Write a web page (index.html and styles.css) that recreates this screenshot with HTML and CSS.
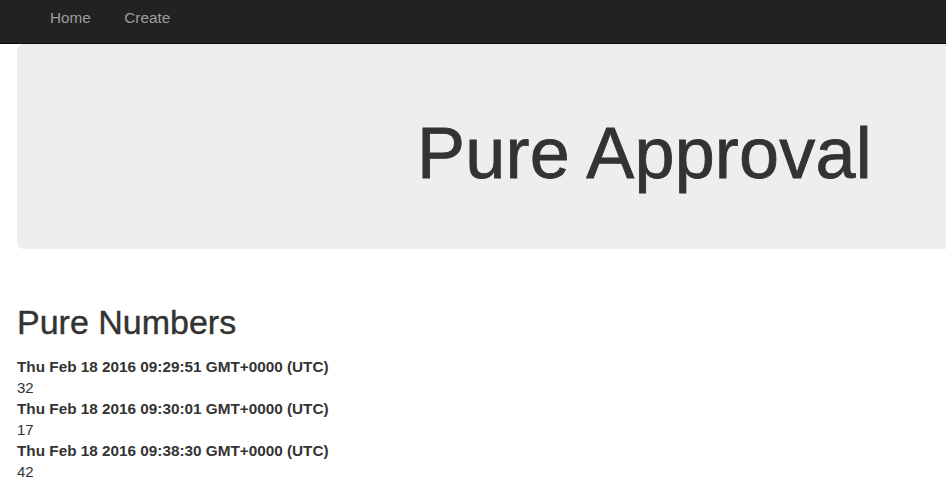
FILE: index.html
```html
<!DOCTYPE html>
<html>
<head>
<meta charset="utf-8">
<link rel="stylesheet" href="styles.css">
</head>
<body>
<nav class="navbar">
  <ul class="nav">
    <li><a href="#">Home</a></li>
    <li><a href="#">Create</a></li>
  </ul>
</nav>
<main class="page">
  <section class="jumbotron">
    <h1>Pure Approval</h1>
  </section>
  <h2 class="section-title">Pure Numbers</h2>
  <dl class="entries">
    <dt>Thu Feb 18 2016 09:29:51 GMT+0000 (UTC)</dt>
    <dd>32</dd>
    <dt>Thu Feb 18 2016 09:30:01 GMT+0000 (UTC)</dt>
    <dd>17</dd>
    <dt>Thu Feb 18 2016 09:38:30 GMT+0000 (UTC)</dt>
    <dd>42</dd>
  </dl>
</main>
</body>
</html>
```
FILE: styles.css
```css
html, body {
  margin: 0;
  padding: 0;
  overflow: hidden;
}
body {
  font-family: "Liberation Sans", Arial, sans-serif;
  font-size: 15px;
  line-height: 21px;
  color: #333;
  background: #fff;
  width: 946px;
  height: 494px;
}
.navbar {
  background: #222;
  border-bottom: 1px solid #080808;
  height: 43px;
}
.nav {
  list-style: none;
  margin: 0;
  padding: 0 0 0 34px;
  display: flex;
}
.nav a {
  display: block;
  padding: 7px 17.5px 15px 16px;
  color: #9d9d9d;
  text-decoration: none;
  font-size: 15.3px;
  line-height: 21px;
}
.page {
  padding: 0 0 0 17px;
}
.jumbotron {
  width: 1255px;
  height: 205px;
  background: #eee;
  border-radius: 7px;
  text-align: center;
  box-sizing: border-box;
  padding-top: 69px;
}
.jumbotron h1 {
  margin: 0;
  font-size: 72px;
  font-weight: normal;
  line-height: 80px;
  letter-spacing: 0.2px;
  -webkit-text-stroke: 0.8px #333;
}
.section-title {
  margin: 53px 0 0 0;
  font-size: 34px;
  font-weight: normal;
  line-height: 40px;
  -webkit-text-stroke: 0.4px #333;
}
.entries {
  margin: 14px 0 0 0;
}
.entries dt {
  font-weight: bold;
  font-size: 15.3px;
}
.entries dd {
  margin: 0;
}
```
